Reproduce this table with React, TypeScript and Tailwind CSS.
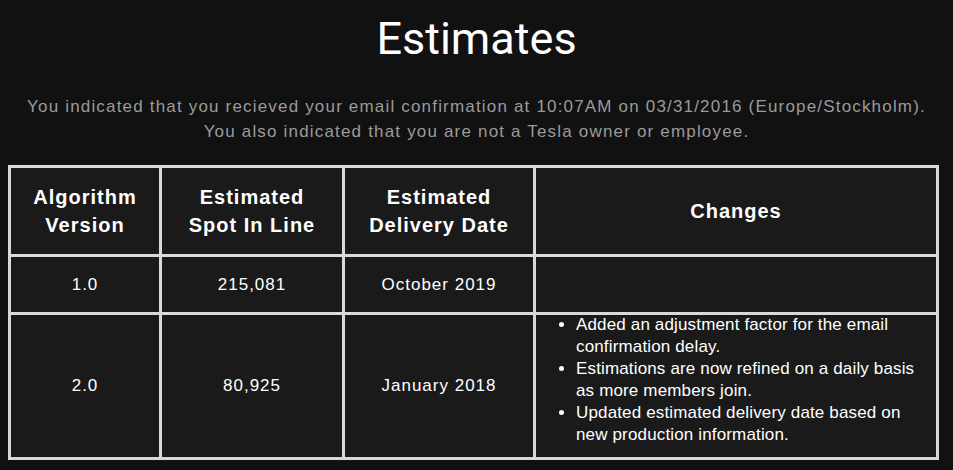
import { Fragment } from 'react'

const rows = [
  { version: '1.0', spot: '215,081', date: 'October 2019', changes: [] as string[] },
  {
    version: '2.0',
    spot: '80,925',
    date: 'January 2018',
    changes: [
      'Added an adjustment factor for the email confirmation delay.',
      'Estimations are now refined on a daily basis as more members join.',
      'Updated estimated delivery date based on new production information.',
    ],
  },
]

export default function App() {
  return (
    <div className="min-h-screen bg-[#111111] pt-[17px] pb-4 font-['Liberation_Sans',Arial,sans-serif]">
      {/* Title */}
      <h1 className="text-center font-['Roboto',sans-serif] text-[45px] leading-[44px] text-white">Estimates</h1>
      <p className="mt-[33px] text-center text-[17px] leading-[25px] tracking-[1.18px] text-[#9b9b9b]">
        You indicated that you recieved your email confirmation at 10:07AM on 03/31/2016 (Europe/Stockholm).
        <br />
        You also indicated that you are not a Tesla owner or employee.
      </p>

      {/* Table */}
      <div className="ml-[8px] mt-[21px] grid w-[931px] grid-cols-[148px_180px_188px_400px] gap-[3px] bg-[#d9d9d9] p-[3px] text-white">
        <div className="flex h-[86px] items-center justify-center bg-[#1a1a1a] text-center text-[20px] font-bold leading-[28px] tracking-[1px]">
          Algorithm<br />Version
        </div>
        <div className="flex items-center justify-center bg-[#1a1a1a] text-center text-[20px] font-bold leading-[28px] tracking-[1px]">
          Estimated<br />Spot In Line
        </div>
        <div className="flex items-center justify-center bg-[#1a1a1a] text-center text-[20px] font-bold leading-[28px] tracking-[1px]">
          Estimated<br />Delivery Date
        </div>
        <div className="flex items-center justify-center bg-[#1a1a1a] text-center text-[20px] font-bold leading-[28px] tracking-[1px]">
          Changes
        </div>

        {rows.map((row) => (
          <Fragment key={row.version}>
            <div className={`flex items-center justify-center bg-[#1a1a1a] text-[17px] tracking-[1px] ${row.changes.length ? 'h-[142px]' : 'h-[55px]'}`}>
              {row.version}
            </div>
            <div className="flex items-center justify-center bg-[#1a1a1a] text-[17px] tracking-[1px]">
              {row.spot}
            </div>
            <div className="flex items-center justify-center bg-[#1a1a1a] text-[17px] tracking-[1px]">
              {row.date}
            </div>
            <div className="bg-[#1a1a1a]">
              {row.changes.length > 0 && (
                <ul className="-mt-[1px] list-disc pl-10 pr-4 text-[17px] leading-[22px] tracking-[0.15px]">
                  {row.changes.map((c) => (
                    <li key={c}>{c}</li>
                  ))}
                </ul>
              )}
            </div>
          </Fragment>
        ))}
      </div>
    </div>
  )
}
